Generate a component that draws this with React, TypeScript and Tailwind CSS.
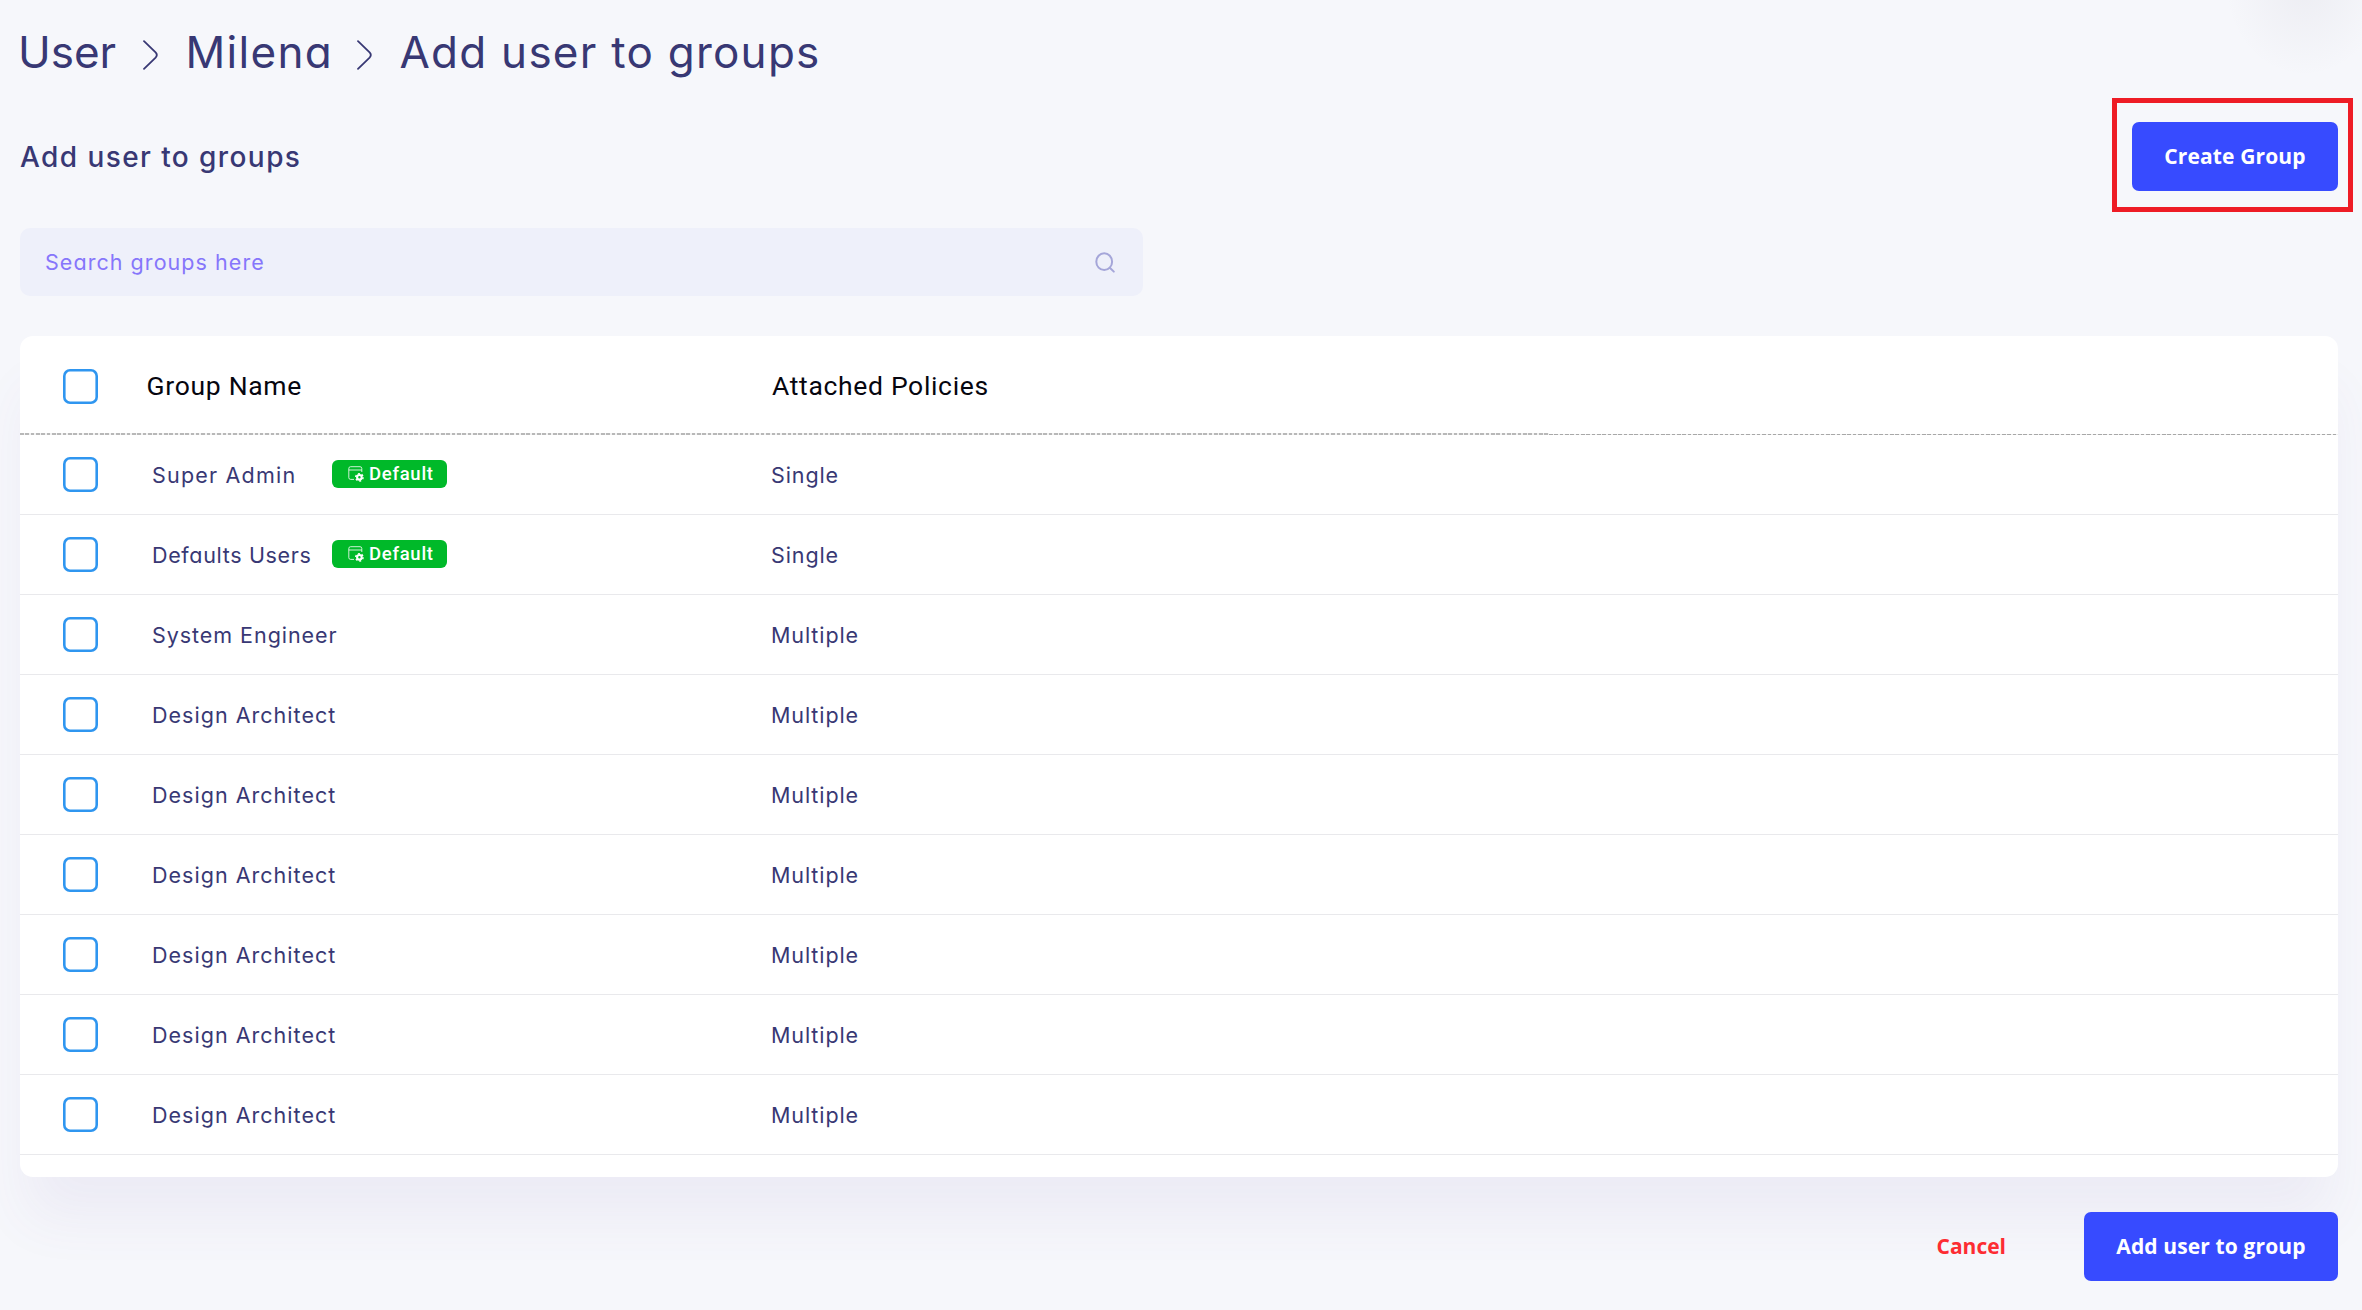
import type { ReactNode } from "react";

const geo =
  "font-['Inter',sans-serif] [font-feature-settings:'cv11'] whitespace-nowrap";

type Row = { name: string; policy: string; isDefault?: boolean; tracking: string };

const rows: Row[] = [
  { name: "Super Admin", policy: "Single", isDefault: true, tracking: "tracking-[1.2px]" },
  { name: "Defaults Users", policy: "Single", isDefault: true, tracking: "tracking-[0.66px]" },
  { name: "System Engineer", policy: "Multiple", tracking: "tracking-[0.95px]" },
  ...Array.from({ length: 6 }, () => ({
    name: "Design Architect",
    policy: "Multiple",
    tracking: "tracking-[1.02px]",
  })),
];

function Chevron() {
  return (
    <svg width="15" height="30" viewBox="0 0 15 30" fill="none" stroke="#383874" strokeWidth="1.8" className="shrink-0">
      <path d="M1 1.2 12.6 12.4Q15 15 12.6 17.6L1 28.8" strokeLinecap="round" />
    </svg>
  );
}

function SearchIcon() {
  return (
    <svg width="20" height="21" viewBox="0 0 20 21" fill="none" stroke="#a5a6d9" strokeWidth="2" strokeLinecap="round">
      <ellipse cx="9.2" cy="9.7" rx="7.9" ry="8.4" />
      <path d="M14.8 15.8 18.8 19.6" />
    </svg>
  );
}

function PolicyIcon() {
  return (
    <svg width="16" height="16" viewBox="0 0 16 16" fill="none" stroke="#ffffff">
      <path
        d="M6 13.4H2.6A1.8 1.8 0 0 1 .8 11.6V2.5A1.8 1.8 0 0 1 2.6.7H12A1.8 1.8 0 0 1 13.8 2.5V6"
        strokeWidth="1"
        opacity="0.8"
      />
      <path d="M.8 4H13.8" strokeWidth="1" opacity="0.8" />
      <circle cx="11.4" cy="11.3" r="2.3" strokeWidth="2.1" />
      <circle cx="11.4" cy="11.3" r="3.7" strokeWidth="1.4" strokeDasharray="1.94 1.94" />
    </svg>
  );
}

function Checkbox() {
  return <span className="block size-[35px] shrink-0 rounded-[7px] bg-white shadow-[inset_0_0_0_2.6px_#2f96f0]" />;
}

function DefaultBadge() {
  return (
    <span className="-mt-0.5 ml-auto mr-[324px] flex h-7 w-[115px] shrink-0 items-center rounded-md bg-[#00b929] pl-4">
      <PolicyIcon />
      <span className="ml-[5px] whitespace-nowrap font-['Roboto',sans-serif] text-[18.5px] font-medium leading-7 tracking-[0.72px] text-white">
        Default
      </span>
    </span>
  );
}

function PrimaryButton({ children, className }: { children: ReactNode; className: string }) {
  return (
    <button
      className={`flex h-[69px] items-center justify-center whitespace-nowrap rounded-[7px] bg-[#374bff] pt-px font-['Open_Sans',sans-serif] text-[21px] font-bold tracking-[0.13px] text-white ${className}`}
    >
      {children}
    </button>
  );
}

export default function App() {
  return (
    <div className="flex h-[1310px] w-[2362px] flex-col overflow-hidden bg-[#f6f7fb] bg-[radial-gradient(ellipse_80px_90px_at_2305px_-14px,rgba(90,80,110,0.06),transparent)] text-[#383874]">
      <nav className="flex h-[104px] shrink-0 items-center pl-[18px]">
        <span className={`${geo} w-[125px] text-[44px] leading-none`}>User</span>
        <span className="mt-[5px]"><Chevron /></span>
        <span className={`${geo} ml-[27.5px] w-[171.5px] text-[44px] leading-none tracking-[1.3px]`}>Milena</span>
        <span className="mt-[5px]"><Chevron /></span>
        <span className={`${geo} ml-[27.5px] text-[44px] leading-none tracking-[1.25px]`}>Add user to groups</span>
      </nav>

      <header className="flex h-[105px] shrink-0 items-center justify-between pl-5 pr-[9px]">
        <h1 className={`${geo} text-[28px] font-medium tracking-[1.42px]`}>Add user to groups</h1>
        <div className="-mt-[3px] flex h-[114px] w-[241px] shrink-0 items-center border-[5px] border-[#ee1c25] pl-[15px]">
          <PrimaryButton className="mt-0.5 w-[206px]">Create Group</PrimaryButton>
        </div>
      </header>

      <div className="ml-5 mt-[19px] flex h-[68px] w-[1123px] shrink-0 items-center justify-between rounded-[10px] bg-[#eef0fa] pl-[25px] pr-7">
        <span className={`${geo} text-[21.5px] tracking-[1.05px] text-[#8676fb]`}>Search groups here</span>
        <SearchIcon />
      </div>

      <section className="ml-5 mt-10 flex h-[841px] w-[2318px] shrink-0 flex-col rounded-[13px] bg-white shadow-[0_48px_56px_-7px_rgba(112,72,170,0.065)]">
        <div className="flex h-[97px] shrink-0 items-center pl-[43px] pt-[3px] font-['Roboto',sans-serif] text-[26.5px] text-[#06060f]">
          <Checkbox />
          <span className="-mt-px ml-[48.5px] w-[625.5px] whitespace-nowrap tracking-[0.7px]">Group Name</span>
          <span className="-mt-px whitespace-nowrap tracking-[0.67px]">Attached Policies</span>
        </div>
        <div className="flex h-0.5 shrink-0">
          <div className="h-0.5 w-[1529px] bg-[repeating-linear-gradient(90deg,#b8b8b8_0px,#b8b8b8_3.6px,#f2f2f2_3.6px,#f2f2f2_5.33px)]" />
          <div className="mt-px h-px flex-1 bg-[repeating-linear-gradient(90deg,#a8a8a8_0px,#a8a8a8_3.6px,#f0f0f0_3.6px,#f0f0f0_5.33px)]" />
        </div>
        {rows.map((row, i) => (
          <div key={i} className="flex h-20 shrink-0 items-center border-b border-[#e9e9ec] pl-[43px]">
            <Checkbox />
            <div className="ml-[54px] flex w-[619px] items-center">
              <span className={`${geo} text-[21.5px] leading-8 ${row.tracking}`}>{row.name}</span>
              {row.isDefault && <DefaultBadge />}
            </div>
            <span className={`${geo} text-[21.5px] leading-8 tracking-[0.9px]`}>{row.policy}</span>
          </div>
        ))}
      </section>

      <footer className="mt-[35px] flex h-[69px] shrink-0 items-center justify-end pr-6">
        <button className="mr-[78px] whitespace-nowrap font-['Open_Sans',sans-serif] text-[21px] font-bold text-[#fd2c32]">
          Cancel
        </button>
        <PrimaryButton className="w-[254px]">Add user to group</PrimaryButton>
      </footer>
    </div>
  );
}
